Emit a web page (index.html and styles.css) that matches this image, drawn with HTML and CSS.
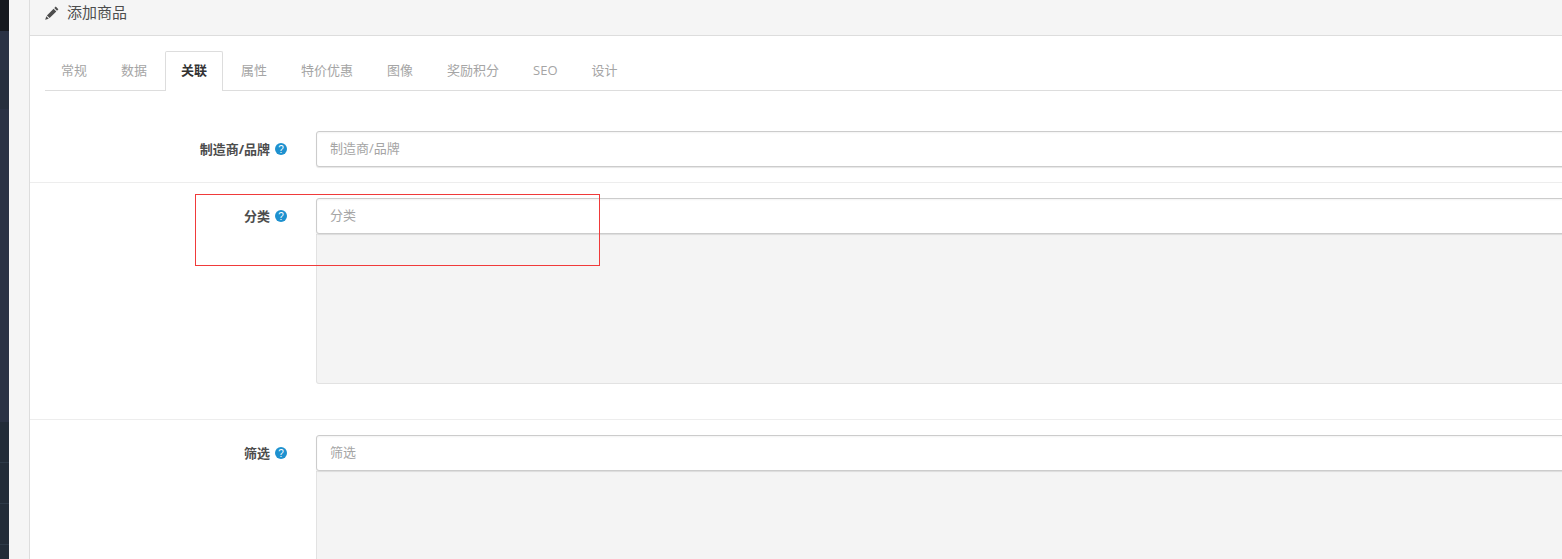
FILE: index.html
```html
<!DOCTYPE html>
<html lang="zh-CN">
<head>
<meta charset="utf-8">
<title>添加商品</title>
<link rel="stylesheet" href="styles.css">
</head>
<body>
<div class="shell">
  <aside class="sidebar">
    <div class="side-top"></div>
    <div class="side-item"></div>
    <div class="side-item side-alt"></div>
    <div class="side-sub"></div>
    <div class="side-link"></div>
    <div class="side-link"></div>
    <div class="side-link"></div>
    <div class="side-link"></div>
  </aside>
  <div class="gutter"></div>
  <main class="panel">
    <header class="panel-heading">
      <svg class="pencil" viewBox="0 0 14 14" aria-hidden="true"><path d="M10.7.6 13.4 3.3 12 4.7 9.3 2ZM8.6 2.7 11.3 5.4 4.6 12.1 1.9 9.4ZM1.3 10.2 3.8 12.7.2 13.8Z"/></svg>
      <span>添加商品</span>
    </header>
    <div class="panel-body">
      <nav class="tabs">
        <a class="tab">常规</a><a class="tab">数据</a><a class="tab active">关联</a><a class="tab">属性</a><a class="tab">特价优惠</a><a class="tab">图像</a><a class="tab">奖励积分</a><a class="tab">SEO</a><a class="tab">设计</a>
      </nav>
      <div class="form">
        <section class="row row-first">
          <label class="label">制造商/品牌 <svg class="help" viewBox="0 0 12 12" aria-hidden="true"><circle cx="6" cy="6" r="6"/><text x="6" y="9.6">?</text></svg></label>
          <div class="field"><input class="input" placeholder="制造商/品牌"></div>
        </section>
        <section class="row row-cat">
          <label class="label">分类 <svg class="help" viewBox="0 0 12 12" aria-hidden="true"><circle cx="6" cy="6" r="6"/><text x="6" y="9.6">?</text></svg></label>
          <div class="field"><input class="input" placeholder="分类"><div class="well"></div></div>
        </section>
        <section class="row row-last">
          <label class="label">筛选 <svg class="help" viewBox="0 0 12 12" aria-hidden="true"><circle cx="6" cy="6" r="6"/><text x="6" y="9.6">?</text></svg></label>
          <div class="field"><input class="input" placeholder="筛选"><div class="well"></div></div>
        </section>
      </div>
    </div>
  </main>
</div>
<div class="annotation"></div>
</body>
</html>
```
FILE: styles.css
```css
* { box-sizing: border-box; }
html, body { margin: 0; height: 559px; overflow: hidden; background: #fff; }
body { font-family: "Open Sans", "Noto Sans CJK SC", sans-serif; font-size: 13px; color: #4d4d4d; position: relative; }
.shell { display: flex; width: 1700px; height: 559px; overflow: hidden; }
.sidebar { width: 9px; flex: none; background: #2a3244; }
.side-top { height: 31px; background: #16191f; }
.side-item { height: 39px; background: #2a3244; }
.side-alt { background: #262f3d; }
.side-sub { height: 313px; background: #2a3244; }
.side-link { height: 41px; background: #222c38; border-bottom: 1px solid #2d3a48; }
.gutter { width: 20px; flex: none; background: #f5f5f5; }
.panel { flex: 1; border-left: 1px solid #ddd; background: #fff; }
.panel-heading { height: 36px; background: #f5f5f5; border-bottom: 1px solid #ddd; padding: 0 15px 10px; display: flex; align-items: center; gap: 8px; font-size: 15px; line-height: 26px; color: #4d4d4d; }
.panel-heading span { position: relative; top: -1px; }
.pencil { width: 14px; height: 14px; fill: #4d4d4d; }
.panel-body { padding: 15px 0 0 15px; }
.tabs { display: flex; height: 40px; border-bottom: 1px solid #ddd; }
.tab { padding: 0 15px; margin-right: 2px; height: 40px; line-height: 37px; color: #a5a5a5; border: 1px solid transparent; border-bottom: 0; white-space: nowrap; }
.tab.active { color: #333; font-weight: 700; background: #fff; border-color: #ddd; border-radius: 2px 2px 0 0; }
.form { margin-left: -15px; margin-top: 25px; }
.row { display: flex; padding: 15px 0; border-bottom: 1px solid #ededed; }
.row-first { height: 67px; }
.row-cat { height: 237px; }
.row-last { border-bottom: 0; }
.label { width: 286px; flex: none; padding: 8px 29px 0 0; text-align: right; font-weight: 700; color: #4d4d4d; line-height: 20px; height: 36px; white-space: nowrap; display: flex; justify-content: flex-end; align-items: flex-start; gap: 5px; }
.help { width: 12px; height: 12px; margin-top: 4px; flex: none; }
.help circle { fill: #1e91cf; }
.help text { fill: #fff; font-family: "Liberation Sans", sans-serif; font-size: 10px; font-weight: 400; text-anchor: middle; }
.field { flex: 1; }
.input { display: block; width: 100%; height: 36px; padding: 0 13px 2px; border: 1px solid #ccc; border-radius: 3px; box-shadow: 0 1px 1px rgba(0,0,0,.1), inset 0 1px 2px rgba(0,0,0,.05); font: inherit; color: #555; outline: 0; background: #fff; position: relative; }
.input::placeholder { color: #a5a5a5; opacity: 1; }
.well { height: 150px; background: #f4f4f4; border: 1px solid #e2e2e2; border-top: 0; border-radius: 0 0 3px 3px; }
.annotation { position: absolute; left: 195px; top: 194px; width: 405px; height: 72px; border: 1px solid #f03a3a; pointer-events: none; }
```
